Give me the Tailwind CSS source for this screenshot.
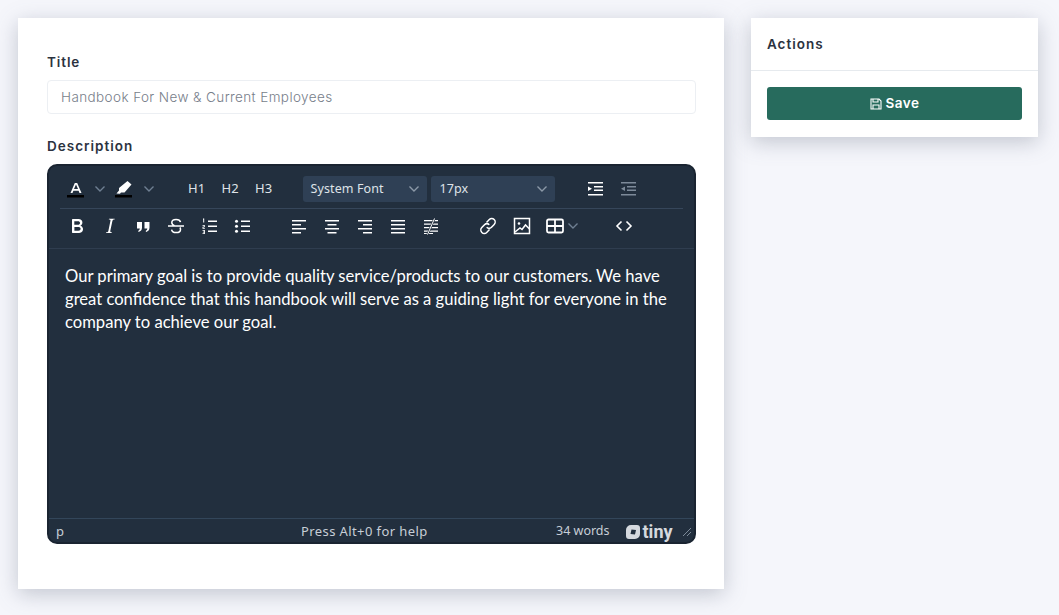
<!DOCTYPE html>
<html lang="en">
<head>
    <meta charset="UTF-8">
    <meta name="viewport" content="width=device-width, initial-scale=1.0">
    <title>Edit Handbook</title>
    <script src="https://cdn.jsdelivr.net/npm/@tailwindcss/browser@4"></script>
</head>
<body class="bg-[#f5f6fb] h-[615px] overflow-hidden font-['Inter',sans-serif]">
    <div class="flex items-start gap-[27px] pt-[18px] pl-[18px]">
        <!-- form card -->
        <div class="w-[706px] h-[571px] bg-white shadow-[0_5px_20px_rgba(100,110,130,0.35)] pl-[29px] pr-[28px] pt-[36px]">
            <label class="block text-[13.5px] leading-[17px] font-semibold tracking-[0.9px] text-[#2b3240]">Title</label>
            <div class="mt-[9px] h-[34px] flex items-center px-[13px] border border-[#eceff3] rounded-[4px] text-[13.5px] tracking-[0.4px] font-light text-[#777e8a]">Handbook For New &amp; Current Employees</div>
            <label class="block mt-[24px] text-[13.5px] leading-[17px] font-semibold tracking-[1px] text-[#2b3240]">Description</label>

            <!-- editor -->
            <div class="mt-[9px] h-[380px] flex flex-col bg-[#222f3e] border-2 border-[#1a2431] rounded-[10px] text-[#dfe3e8] font-['Noto_Sans',sans-serif] overflow-hidden">
                <div class="px-[11px]">
                    <div class="h-[43px] flex items-center border-b border-[#36465a] pt-[3px]">
                        <div class="flex items-center w-[48px] pl-[6px] gap-[8px]">
                            <svg class="w-[20px] h-[24px]" viewBox="0 0 20 24"><path fill="#fff" d="M4.500 16 8.800 6h2.400l4.300 10h-2l-.9-2.300H7.400L6.500 16zm3.500-4h4L10 7.500z"/><rect x="1" y="18" width="17" height="2.500" fill="#000"/></svg>
                            <svg class="w-[12px] h-[8px]" viewBox="0 0 12 8" fill="none" stroke="#6f7f92" stroke-width="1.400"><path d="M1.500 1.500 6 6l4.500-4.500"/></svg>
                        </div>
                        <div class="flex items-center w-[49px] pl-[6px] gap-[9px]">
                            <svg class="w-[20px] h-[24px]" viewBox="0 0 20 24"><path fill="#fff" d="m13.500 4 4 3.500-7 8H7l-1 1.300-3.500-.3 2.500-3V11z"/><rect x="1" y="18" width="17" height="2.500" fill="#000"/></svg>
                            <svg class="w-[12px] h-[8px]" viewBox="0 0 12 8" fill="none" stroke="#6f7f92" stroke-width="1.400"><path d="M1.500 1.500 6 6l4.500-4.500"/></svg>
                        </div>
                        <div class="flex items-center ml-[23px] pt-[1px] text-[13px] tracking-[0.3px] text-center">
                            <span class="w-[33.500px]">H1</span><span class="w-[33.500px]">H2</span><span class="w-[33.500px]">H3</span>
                        </div>
                        <div class="ml-[22px] w-[124px] h-[26px] flex items-center justify-between pl-[8px] pr-[7px] bg-[#2f4055] rounded-[3px] text-[12.500px] tracking-[0.1px]">
                            <span class="pt-[2px]">System Font</span>
                            <svg class="w-[12px] h-[8px]" viewBox="0 0 12 8" fill="none" stroke="#8c99a8" stroke-width="1.400"><path d="M1.500 1.500 6 6l4.500-4.500"/></svg>
                        </div>
                        <div class="ml-[4px] w-[124px] h-[26px] flex items-center justify-between pl-[9px] pr-[7px] bg-[#2f4055] rounded-[3px] text-[12.500px] tracking-[0.1px]">
                            <span class="pt-[2px]">17px</span>
                            <svg class="w-[12px] h-[8px]" viewBox="0 0 12 8" fill="none" stroke="#8c99a8" stroke-width="1.400"><path d="M1.500 1.500 6 6l4.500-4.500"/></svg>
                        </div>
                        <div class="ml-[24px] flex">
                            <span class="w-[33px] flex justify-center"><svg class="w-[18px] h-[18px]" viewBox="0 0 18 18" fill="#fff"><path d="M2 2h15v1.500H2zM8 6h9v1.500H8zM8 9.500h9V11H8zM2 14h15v1.500H2zM2 6.500 6 8.700 2 11z"/></svg></span>
                            <span class="w-[33px] flex justify-center"><svg class="w-[18px] h-[18px]" viewBox="0 0 18 18" fill="#7d8a99"><path d="M2 2h15v1.500H2zM8 6h9v1.500H8zM8 9.500h9V11H8zM2 14h15v1.500H2zM6 6.500 2 8.700 6 11z"/></svg></span>
                        </div>
                    </div>
                    <div class="h-[39px] flex items-center pb-[6px]">
                        <div class="flex">
                            <span class="w-[33.500px] flex justify-center"><svg class="w-[24px] h-[24px]" viewBox="0 0 24 24" fill="#fff"><path d="M7.800 19c-.3 0-.5 0-.6-.2l-.2-.5V5.700c0-.2 0-.4.2-.5l.6-.2h5c1.500 0 2.700.3 3.500 1 .7.6 1.100 1.400 1.100 2.500a3 3 0 0 1-.6 1.900c-.4.6-1 1-1.600 1.200.4.1.9.3 1.300.6s.8.7 1 1.200c.4.4.5 1 .5 1.600 0 1.300-.4 2.300-1.300 3-.8.7-2.100 1-3.800 1H7.800zm5-8.300c.6 0 1.200-.1 1.600-.5.4-.3.6-.7.600-1.300 0-1.100-.8-1.700-2.300-1.700H9.300v3.500h3.500zm.5 6c.7 0 1.300-.1 1.700-.4.4-.4.6-.9.6-1.500s-.2-1-.7-1.400c-.4-.3-1-.4-2-.4H9.400v3.700h3.900z"/></svg></span>
                            <span class="w-[33px] flex justify-center"><svg class="w-[24px] h-[24px]" viewBox="0 0 24 24" fill="#fff"><path d="m16.700 4.700-.1.900h-.3c-.6 0-1 0-1.400.3-.3.3-.4.6-.5 1.100l-2.100 9.800v.6c0 .5.4.8 1.400.8h.2l-.2.800H8l.2-.8h.2c1.100 0 1.800-.5 2-1.500l2-9.800.1-.5c0-.6-.4-.8-1.400-.8h-.3l.2-.9h5.800z"/></svg></span>
                            <span class="w-[33px] flex justify-center"><svg class="w-[24px] h-[24px]" viewBox="0 0 24 24" fill="#fff"><path d="M6 8h5v5.500c0 2.500-1.300 3.800-3.300 4.500l-.6-1.100c1-.5 1.600-1.200 1.700-2.400H6zm7.500 0h5v5.500c0 2.500-1.300 3.800-3.300 4.500l-.6-1.100c1-.5 1.600-1.200 1.700-2.400h-2.800z"/></svg></span>
                            <span class="w-[33px] flex justify-center"><svg class="w-[24px] h-[24px]" viewBox="0 0 24 24" fill="none" stroke="#fff" stroke-width="1.500"><path d="M4 12h16M16.500 8.200c-.4-1.700-2-2.700-4.400-2.700-2.500 0-4.300 1.200-4.300 3.100 0 1.500.9 2.500 2.700 3.100M7.600 15.600c.3 1.900 2 3 4.500 3 2.700 0 4.400-1.200 4.400-3.200 0-.8-.2-1.400-.6-1.900"/></svg></span>
                            <span class="w-[33px] flex justify-center"><svg class="w-[24px] h-[24px]" viewBox="0 0 24 24" fill="#fff"><path d="M11 6.500h9V8h-9zM11 11.500h9V13h-9zM11 16.500h9V18h-9zM6 4.500h1.200v4H6.200V5.500H6zM5.500 11h2.300v2.200H6.500v.8h1.400v.8H5.500v-2.100h1.300v-.9H5.500zM5.500 16h2.400v4H5.500v-.8h1.400v-.8h-1v-.7h1v-.9H5.500z"/></svg></span>
                            <span class="w-[33px] flex justify-center"><svg class="w-[24px] h-[24px]" viewBox="0 0 24 24" fill="#fff"><path d="M11 6.500h9V8h-9zM11 11.500h9V13h-9zM11 16.500h9V18h-9z"/><circle cx="6.500" cy="7.200" r="1.500"/><circle cx="6.500" cy="12.200" r="1.500"/><circle cx="6.500" cy="17.200" r="1.500"/></svg></span>
                        </div>
                        <div class="flex ml-[24px]">
                            <span class="w-[33px] flex justify-center"><svg class="w-[24px] h-[24px]" viewBox="0 0 24 24" fill="#fff"><path d="M5 6h14v1.500H5zM5 10h9v1.500H5zM5 14h14v1.500H5zM5 18h9v1.500H5z"/></svg></span>
                            <span class="w-[33px] flex justify-center"><svg class="w-[24px] h-[24px]" viewBox="0 0 24 24" fill="#fff"><path d="M5 6h14v1.500H5zM7.500 10h9v1.500h-9zM5 14h14v1.500H5zM7.500 18h9v1.500h-9z"/></svg></span>
                            <span class="w-[33px] flex justify-center"><svg class="w-[24px] h-[24px]" viewBox="0 0 24 24" fill="#fff"><path d="M5 6h14v1.500H5zM10 10h9v1.500h-9zM5 14h14v1.500H5zM10 18h9v1.500h-9z"/></svg></span>
                            <span class="w-[33px] flex justify-center"><svg class="w-[24px] h-[24px]" viewBox="0 0 24 24" fill="#fff"><path d="M5 6h14v1.500H5zM5 10h14v1.500H5zM5 14h14v1.500H5zM5 18h14v1.500H5z"/></svg></span>
                            <span class="w-[33px] flex justify-center"><svg class="w-[24px] h-[24px]" viewBox="0 0 24 24" fill="#fff"><path d="M5 6h14v1.200H5zM5 9.500h14v1.200H5zM5 13h14v1.200H5zM5 16.500h14v1.200H5zM5 20h9v-1H5z"/><path d="m15.500 4.500-7 16" stroke="#222f3e" stroke-width="2"/><path d="m15.500 4.500-7 16" stroke="#fff" stroke-width="1"/></svg></span>
                        </div>
                        <div class="flex items-center ml-[24px]">
                            <span class="w-[33.500px] flex justify-center"><svg class="w-[24px] h-[24px]" viewBox="0 0 24 24" fill="none" stroke="#fff" stroke-width="1.500"><path d="m10.500 8.500 2.800-2.900a3.400 3.400 0 0 1 4.900 4.800l-2.700 2.800a3.400 3.400 0 0 1-4.800 0M13.500 15.500l-2.800 2.900a3.400 3.400 0 0 1-4.900-4.800l2.700-2.800a3.400 3.400 0 0 1 4.800 0"/></svg></span>
                            <span class="w-[33px] flex justify-center"><svg class="w-[24px] h-[24px]" viewBox="0 0 24 24" fill="none" stroke="#fff" stroke-width="1.500"><rect x="4.500" y="4.500" width="15" height="15"/><circle cx="9" cy="9.500" r="1.300" fill="#fff" stroke="none"/><path d="m5 18 5-4 2 1.500 3.500-4.500 4 4"/></svg></span>
                            <span class="w-[44px] flex items-center justify-start pl-[7px] gap-[2px]"><svg class="w-[20px] h-[20px]" viewBox="0 0 20 20" fill="none" stroke="#fff" stroke-width="1.800"><rect x="2" y="3.500" width="16" height="13" rx="1.500"/><path d="M2 10h16M10 3.500v13"/></svg><svg class="w-[12px] h-[8px] shrink-0" viewBox="0 0 12 8" fill="none" stroke="#6f7f92" stroke-width="1.400"><path d="M1.500 1.500 6 6l4.500-4.500"/></svg></span>
                            <span class="ml-[25px] w-[33px] flex justify-center"><svg class="w-[24px] h-[24px]" viewBox="0 0 24 24" fill="none" stroke="#fff" stroke-width="1.600"><path d="m9.500 7.500-4.500 4.500 4.500 4.500M14.500 7.500l4.500 4.500-4.500 4.500"/></svg></span>
                        </div>
                    </div>
                </div>
                <div class="flex-1 border-t border-[#2f3d4f] px-[16px] pt-[16px] text-[16.600px] leading-[23px] font-['Lato',sans-serif] text-white">
                    Our primary goal is to provide quality service/products to our customers. We have great confidence that this handbook will serve as a guiding light for everyone in the company to achieve our goal.
                </div>
                <div class="h-[24px] flex items-center border-t border-[#33465a] pl-[7px] pr-[2px] pt-[2px] text-[13px] tracking-[0.4px] text-[#c7ced6]">
                    <span class="w-[245px]">p</span>
                    <span class="w-[255px]">Press Alt+0 for help</span>
                    <span class="text-[12.500px] tracking-normal">34 words</span>
                    <span class="ml-[15px] flex items-center gap-[2px] font-['Roboto',sans-serif] font-bold text-[18px] leading-[20px] tracking-normal text-[#d5d9de]">
                        <svg class="w-[16px] h-[16px]" viewBox="0 0 16 16" fill="#d5d9de"><path fill-rule="evenodd" d="M6 1h6a3 3 0 0 1 3 3v6a5 5 0 0 1-5 5H4a3 3 0 0 1-3-3V6a5 5 0 0 1 5-5zm.5 4.500-1 4.500 4.500.500 1-4.500z"/></svg>tiny
                    </span>
                    <svg class="ml-auto w-[10px] h-[10px]" viewBox="0 0 10 10" fill="none" stroke="#7d8a99" stroke-width="1"><path d="m1 9 8-8M5 9l4-4"/></svg>
                </div>
            </div>
        </div>

        <!-- actions card -->
        <div class="w-[287px] h-[119px] bg-white shadow-[0_5px_20px_rgba(100,110,130,0.35)]">
            <div class="h-[53px] flex items-center px-[16px] border-b border-[#e6eaee] text-[13.5px] font-semibold tracking-[1px] text-[#2b3240]">Actions</div>
            <div class="px-[16px] pt-[16px]">
                <button class="w-full h-[33px] flex items-center justify-center gap-[4px] bg-[#276b5d] rounded-[3px] text-white text-[13.5px] font-semibold tracking-[0.5px]">
                    <svg class="w-[12px] h-[12px]" viewBox="0 0 12 12" fill="none" stroke="#fff" stroke-width="1.100"><path d="M1 1h8l2 2v8H1zM3 1v3h5V1M3 11V7h6v4"/></svg>
                    Save
                </button>
            </div>
        </div>
    </div>
</body>
</html>
